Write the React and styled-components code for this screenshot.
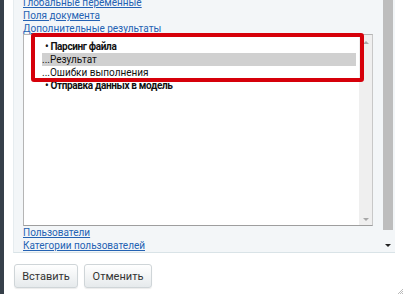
import React from 'react';
import styled, { createGlobalStyle } from 'styled-components';

const Global = createGlobalStyle`
  html, body {
    margin: 0;
    padding: 0;
    background: #fff;
    overflow: hidden;
  }
  body {
    font-family: Roboto, "Noto Sans", sans-serif;
    font-size: 10px;
  }
`;

const Page = styled.div`
  position: relative;
  display: flex;
  width: 403px;
  height: 294px;
  overflow: hidden;
`;

const DarkStrip = styled.div`
  width: 4px;
  flex: none;
  background: #36404a;
`;

const Main = styled.div`
  flex: none;
  margin-left: 9px;
  width: 382px;
  display: flex;
  flex-direction: column;
`;

const Panel = styled.div`
  display: flex;
  height: 256px;
  margin-top: -4px;
  background: #f3f6f8;
  border-left: 1px solid #e6ecef;
  border-bottom: 1px solid #d9e3e7;
`;

const Content = styled.div`
  flex: 1;
  padding-left: 9px;
  padding-right: 10px;
`;

const Link = styled.a`
  display: block;
  color: #2462b3;
  text-decoration: underline;
  line-height: 13px;
  height: 13px;
  white-space: nowrap;
  cursor: pointer;
`;

const ListBox = styled.div`
  position: relative;
  display: flex;
  height: 190px;
  margin-top: -1px;
  background: #fff;
  border: 1px solid #b5b5b5;
  border-right-color: #c8c8c8;
  border-bottom-color: #9e9e9e;
`;

const Items = styled.div`
  flex: 1;
  padding: 5px 3px 0 18px;
`;

const Item = styled.div`
  height: 13px;
  line-height: 13px;
  white-space: nowrap;
  color: #111;
  font-weight: ${p => (p.$bold ? 700 : 400)};
  letter-spacing: ${p => (p.$bold ? '-0.35px' : '0')};
  padding-left: ${p => (p.$bold ? '3px' : '0')};
  background: ${p => (p.$selected ? '#d0d0d0' : 'transparent')};
`;

const InnerScroll = styled.div`
  width: 13px;
  flex: none;
  background: #efefef;
  display: flex;
  flex-direction: column;
  justify-content: space-between;
  align-items: center;
  padding: 6px 0 4px;
`;

const Annotation = styled.div`
  position: absolute;
  left: 7px;
  top: -2px;
  width: 325px;
  height: 41px;
  border: 4px solid #d6000a;
  border-radius: 3px;
  pointer-events: none;
`;

const OuterScroll = styled.div`
  width: 10px;
  flex: none;
  margin-right: 2px;
  display: flex;
  flex-direction: column;
  align-items: center;
`;

const Thumb = styled.div`
  width: 10px;
  height: 234px;
  background: #bdbdbd;
`;

const Arrow = styled.div`
  width: 0;
  height: 0;
  border-left: ${p => p.$size}px solid transparent;
  border-right: ${p => p.$size}px solid transparent;
  ${p => (p.$up ? 'border-bottom' : 'border-top')}: ${p => p.$size}px solid ${p => p.$color};
  margin-top: ${p => p.$mt || 0}px;
`;

const Buttons = styled.div`
  display: flex;
  gap: 6px;
  margin-top: 11px;
  margin-left: 1px;
`;

const Button = styled.button`
  height: 24px;
  width: ${p => p.$w}px;
  padding: 0;
  font-family: Roboto, "Noto Sans", sans-serif;
  font-size: 11px;
  color: #333;
  background: linear-gradient(#ffffff, #e6eaec);
  border: 1px solid #cfd5d8;
  border-radius: 3px;
  box-shadow: 0 1px 1px rgba(0, 0, 0, 0.08);
`;

const Grip = styled.svg`
  position: absolute;
  right: 0;
  bottom: 0;
`;

export default function App() {
  return (
    <Page>
      <Global />
      <DarkStrip />
      <Main>
        <Panel>
          <Content>
            <Link>Глобальные переменные</Link>
            <Link>Поля документа</Link>
            <Link>Дополнительные результаты</Link>
            <ListBox>
              <Items>
                <Item $bold>• Парсинг файла</Item>
                <Item $selected>...Результат</Item>
                <Item>...Ошибки выполнения</Item>
                <Item $bold>• Отправка данных в модель</Item>
              </Items>
              <InnerScroll>
                <Arrow $up $size={3} $color="#a8a8a8" />
                <Arrow $size={3} $color="#a8a8a8" />
              </InnerScroll>
              <Annotation />
            </ListBox>
            <Link>Пользователи</Link>
            <Link>Категории пользователей</Link>
          </Content>
          <OuterScroll>
            <Thumb />
            <Arrow $size={3} $color="#222" $mt={14} />
          </OuterScroll>
        </Panel>
        <Buttons>
          <Button $w={64}>Вставить</Button>
          <Button $w={68}>Отменить</Button>
        </Buttons>
      </Main>
      <Grip width="6" height="6" viewBox="0 0 6 6">
        <path d="M6 1 L1 6 M6 3 L3 6 M6 5 L5 6" stroke="#aaa" strokeWidth="0.8" />
      </Grip>
    </Page>
  );
}
